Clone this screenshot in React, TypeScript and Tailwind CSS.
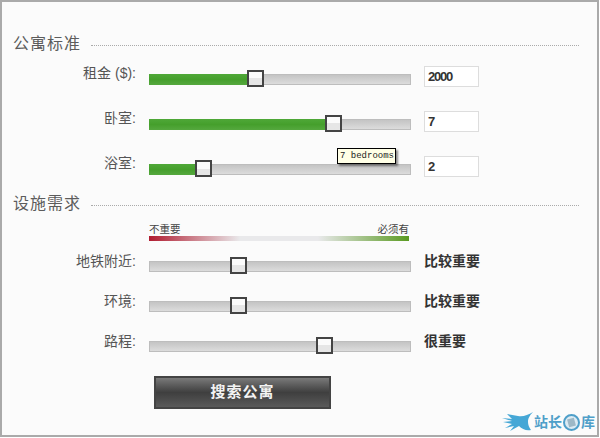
const CJK = "font-['Liberation_Sans','Noto_Sans_CJK_SC',sans-serif]";

function SectionHead({ title }: { title: string }) {
  return (
    <div className="flex h-5 w-[566px] items-center">
      <h2 className="text-[16px] leading-5 tracking-[1px] text-[#5c5c5c]">{title}</h2>
      <div className="ml-[10px] mt-[3px] flex-1 border-t border-dotted border-[#aaa]" />
    </div>
  );
}

function Track({ value, fill }: { value: number; fill?: boolean }) {
  return (
    <div className="relative mt-[10px] h-[11px] w-[262px] border border-[#bdbdbd] bg-gradient-to-b from-[#c4c4c4] to-[#dcdcdc]">
      {fill && (
        <div
          className="absolute -left-px -top-px h-[11px] bg-gradient-to-b from-[#4fa838] via-[#459f2c] to-[#55a83e]"
          style={{ width: value }}
        />
      )}
      <div
        className="absolute top-[-5px] h-[17px] w-[17px] border-2 border-[#444] bg-gradient-to-b from-[#fbfbfb] from-50% to-[#e6e6e6] to-50%"
        style={{ left: value - 1 }}
      />
    </div>
  );
}

function NumberRow({ label, value, pos }: { label: string; value: string; pos: number }) {
  return (
    <div className="flex h-[45px] items-start pt-[7px]">
      <label className="-mt-px h-5 w-[123px] text-right text-[14px] leading-5 text-[#555]">{label}</label>
      <div className="ml-[13px]">
        <Track value={pos} fill />
      </div>
      <div className="ml-[13px] mt-[2px] flex h-[21px] w-[55px] items-center border border-[#ddd] bg-white pl-[3px] pt-px text-[13px] font-bold tracking-[-1.2px] text-[#333]">
        {value}
      </div>
    </div>
  );
}

function ImportanceRow({ label, text, pos }: { label: string; text: string; pos: number }) {
  return (
    <div className="flex h-10 items-start">
      <label className="h-5 w-[123px] text-right text-[14px] leading-5 text-[#555]">{label}</label>
      <div className="ml-[13px]">
        <Track value={pos} />
      </div>
      <span className="ml-[13px] text-[14px] font-bold leading-5 text-[#333]">{text}</span>
    </div>
  );
}

function Watermark() {
  return (
    <div className="absolute bottom-[3px] right-[2px] flex items-center text-[#4f9fc9]">
      <svg width="31" height="20" viewBox="0 0 31 20">
        <path
          d="M0 6 L10 7 L5 2 L16 4 C21 5 26 3 31 0 C27 4 26 7 26 10 C26 13 27 15 29 18 C24 19 20 17 17 14 L8 19 L12 14 L3 16 L10 12 L1 10 L10 9 Z"
          fill="#45a7d6"
        />
      </svg>
      <span className="ml-[1px] text-[14px] font-bold leading-5">站长</span>
      <svg className="mx-[1px]" width="17" height="17" viewBox="0 0 17 17">
        <circle cx="8.5" cy="8.5" r="7.5" fill="#dcebf3" stroke="#4f9fc9" strokeWidth="2" />
        <rect x="5" y="4.5" width="7" height="8" fill="#9db8c6" transform="rotate(-15 8.5 8.5)" />
      </svg>
      <span className="text-[14px] font-bold leading-5">库</span>
    </div>
  );
}

export default function App() {
  return (
    <div className={`${CJK} relative h-[437px] w-[599px] border-2 border-[#aaa] bg-[#fbfbfb] pl-[11px] pt-[32px]`}>
      <SectionHead title="公寓标准" />
      <div className="relative mt-[3px]">
        <NumberRow label="租金 ($):" value="2000" pos={98} />
        <NumberRow label="卧室:" value="7" pos={176} />
        <NumberRow label="浴室:" value="2" pos={46} />
        {/* slider value tooltip */}
        <div className="absolute left-[324px] top-[91px] flex h-[16px] w-[59px] items-center border border-black bg-[#ffffe6] pl-[2px] font-['Liberation_Mono',monospace] text-[9px] leading-none text-[#222] shadow-[2px_2px_2px_rgba(0,0,0,0.45)]">
          7 bedrooms
        </div>
      </div>

      <div className="mt-[2px]">
        <SectionHead title="设施需求" />
      </div>

      <div className="ml-[136px] mt-[9px] w-[260px]">
        <div className="flex h-[13px] items-center justify-between text-[10.5px] leading-none text-[#444]">
          <span>不重要</span>
          <span>必须有</span>
        </div>
        <div className="h-[5px] bg-[linear-gradient(to_right,#b01c30,#e9e9eb_35%,#e9e9eb_65%,#5a9a22)]" />
      </div>

      <div className="mt-[10px]">
        <ImportanceRow label="地铁附近:" text="比较重要" pos={81} />
        <ImportanceRow label="环境:" text="比较重要" pos={81} />
        <ImportanceRow label="路程:" text="很重要" pos={167} />
      </div>

      <button className="ml-[141px] mt-[5px] flex h-[33px] w-[177px] items-center justify-center border-2 border-[#444] bg-gradient-to-b from-[#7a7a7a] via-[#3f3f3f] to-[#5a5a5a] text-[15px] font-bold tracking-[1px] text-[#f2f2f2]">
        搜索公寓
      </button>

      <Watermark />
    </div>
  );
}
